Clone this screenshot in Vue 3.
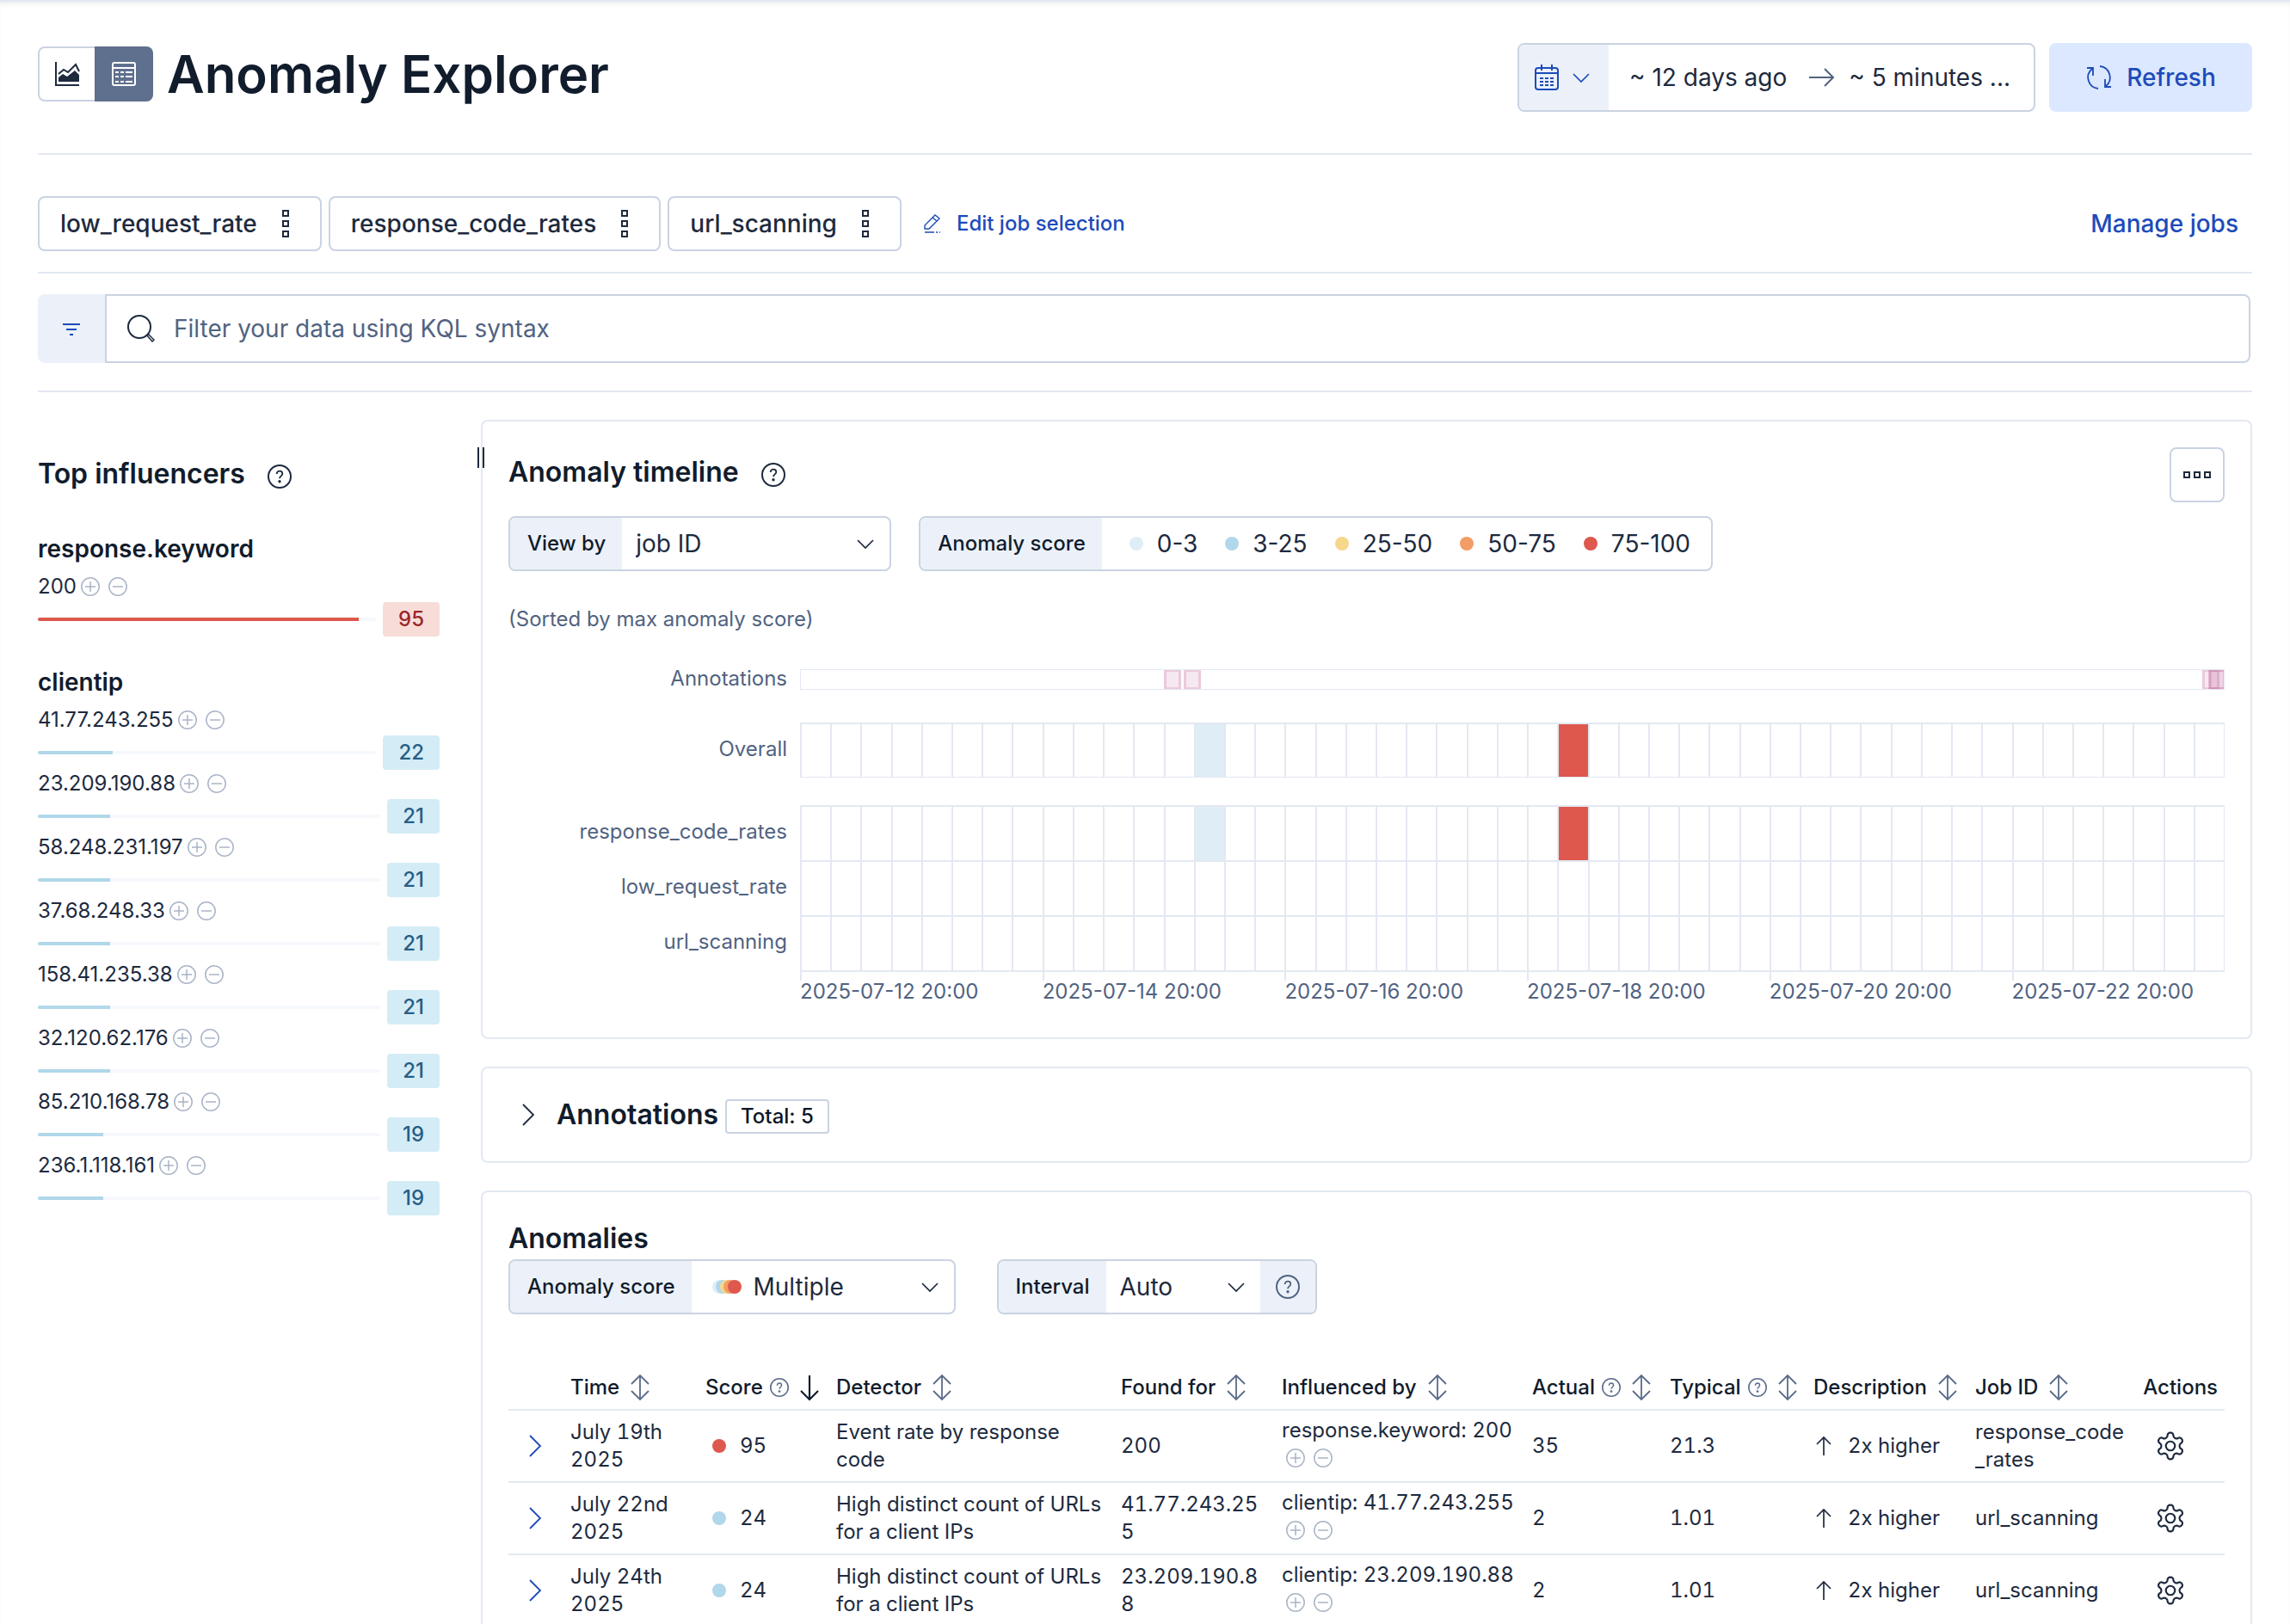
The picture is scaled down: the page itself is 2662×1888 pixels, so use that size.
<script setup>
import { ref } from 'vue'

const jobs = ['low_request_rate', 'response_code_rates', 'url_scanning']

const influencers = [
  { field: 'response.keyword', values: [{ name: '200', score: 95, level: 'critical' }] },
  {
    field: 'clientip',
    values: [
      { name: '41.77.243.255', score: 22, level: 'warning' },
      { name: '23.209.190.88', score: 21, level: 'warning' },
      { name: '58.248.231.197', score: 21, level: 'warning' },
      { name: '37.68.248.33', score: 21, level: 'warning' },
      { name: '158.41.235.38', score: 21, level: 'warning' },
      { name: '32.120.62.176', score: 21, level: 'warning' },
      { name: '85.210.168.78', score: 19, level: 'warning' },
      { name: '236.1.118.161', score: 19, level: 'warning' },
    ],
  },
]

const severities = [
  { label: '0-3', level: 'low' },
  { label: '3-25', level: 'warning' },
  { label: '25-50', level: 'minor' },
  { label: '50-75', level: 'major' },
  { label: '75-100', level: 'critical' },
]

const bucketCount = 47
const overall = { 13: 'low', 25: 'critical' }
const lanes = [
  { label: 'response_code_rates', cells: { 13: 'low', 25: 'critical' } },
  { label: 'low_request_rate', cells: {} },
  { label: 'url_scanning', cells: {} },
]
const ticks = [
  '2025-07-12 20:00',
  '2025-07-14 20:00',
  '2025-07-16 20:00',
  '2025-07-18 20:00',
  '2025-07-20 20:00',
  '2025-07-22 20:00',
]
// start of each annotation as a share of the visible time range
const annotations = [25.5, 26.9, 98.5, 98.9, 99]

const columns = [
  { label: 'Time', width: 157, sort: 'sortable' },
  { label: 'Score', width: 152, sort: 'down', help: true },
  { label: 'Detector', width: null, sort: 'sortable' },
  { label: 'Found for', width: 187, sort: 'sortable' },
  { label: 'Influenced by', width: 291, sort: 'sortable' },
  { label: 'Actual', width: 160, sort: 'sortable', help: true },
  { label: 'Typical', width: 167, sort: 'sortable', help: true },
  { label: 'Description', width: 188, sort: 'sortable' },
  { label: 'Job ID', width: 195, sort: 'sortable' },
]

const anomalies = [
  { time: 'July 19th 2025', score: 95, level: 'critical', detector: 'Event rate by response code', found: '200', influencer: 'response.keyword: 200', actual: '35', typical: '21.3', description: '2x higher', job: 'response_code_rates' },
  { time: 'July 22nd 2025', score: 24, level: 'warning', detector: 'High distinct count of URLs for a client IPs', found: '41.77.243.255', influencer: 'clientip: 41.77.243.255', actual: '2', typical: '1.01', description: '2x higher', job: 'url_scanning' },
  { time: 'July 24th 2025', score: 24, level: 'warning', detector: 'High distinct count of URLs for a client IPs', found: '23.209.190.88', influencer: 'clientip: 23.209.190.88', actual: '2', typical: '1.01', description: '2x higher', job: 'url_scanning' },
]

const viewBy = ref('job ID')
const severity = ref('Multiple')
const interval = ref('Auto')
const query = ref('')
</script>

<template>
  <svg class="sprite" aria-hidden="true">
    <symbol id="i-chart" viewBox="0 0 32 32">
      <path d="M3 2v27h27" fill="none" stroke="currentColor" stroke-width="2" />
      <path d="M6 25v-5l5-4 5 3 9-7 5 5v8H6z" fill="currentColor" />
      <path d="M6 16l6-5 5 3 9-9 4 8" fill="none" stroke="currentColor" stroke-width="2" />
    </symbol>
    <symbol id="i-table" viewBox="0 0 32 32">
      <rect x="3" y="3" width="26" height="26" rx="2" fill="none" stroke="currentColor" stroke-width="2" />
      <path d="M3 9h26" stroke="currentColor" stroke-width="2" />
      <path d="M6 14h4M12 14h4M18 14h8M6 19h4M12 19h4M18 19h8M6 25h4M12 25h4M18 25h8" stroke="currentColor" stroke-width="2" />
    </symbol>
    <symbol id="i-calendar" viewBox="0 0 32 32">
      <rect x="3" y="5" width="26" height="25" rx="3" fill="none" stroke="currentColor" stroke-width="2" />
      <path d="M3 11h26M10 1v7M22 1v7" fill="none" stroke="currentColor" stroke-width="2" />
      <path d="M8 17h4M14 17h4M20 17h4M8 21h4M14 21h4M20 21h4M8 25h4M14 25h4M20 25h4" stroke="currentColor" stroke-width="2" />
    </symbol>
    <symbol id="i-down" viewBox="0 0 24 24">
      <path d="M3 8l9 9 9-9" fill="none" stroke="currentColor" stroke-width="1.7" />
    </symbol>
    <symbol id="i-right" viewBox="0 0 32 32">
      <path d="M9 4l12 12L9 28" fill="none" stroke="currentColor" stroke-width="1.8" />
    </symbol>
    <symbol id="i-arrow" viewBox="0 0 32 32">
      <path d="M2 16h28M20 6l10 10-10 10" fill="none" stroke="currentColor" stroke-width="2" />
    </symbol>
    <symbol id="i-refresh" viewBox="0 0 32 32">
      <path d="M17 3a13 13 0 0 1 7 23M23 18v9h7M15 29A13 13 0 0 1 8 6M9 14V5H2" fill="none" stroke="currentColor" stroke-width="1.8" />
    </symbol>
    <symbol id="i-menu-v" viewBox="0 0 32 32">
      <path d="M13 1h6v6h-6zM13 13h6v6h-6zM13 25h6v6h-6z" fill="none" stroke="currentColor" stroke-width="2" />
    </symbol>
    <symbol id="i-menu-h" viewBox="0 0 32 32">
      <path d="M1 13h6v6H1zM13 13h6v6h-6zM25 13h6v6h-6z" fill="none" stroke="currentColor" stroke-width="2" />
    </symbol>
    <symbol id="i-pencil" viewBox="0 0 24 24">
      <path d="M3 18v-4L15 2l5 4L8 18zM12 5l5 4" fill="none" stroke="currentColor" stroke-width="1.4" />
      <path d="M3 22h11M16 22h2M20 22h1" stroke="currentColor" stroke-width="1.6" />
    </symbol>
    <symbol id="i-filter" viewBox="0 0 24 24">
      <path d="M2 7h20M6 13h12M10 19h4" stroke="currentColor" stroke-width="2" />
    </symbol>
    <symbol id="i-search" viewBox="0 0 32 32">
      <circle cx="14" cy="14" r="13" fill="none" stroke="currentColor" stroke-width="2" />
      <path d="M23 24l1.5-1.5 6.500 6.500-2 2z" fill="none" stroke="currentColor" stroke-width="1.5" />
    </symbol>
    <symbol id="i-help" viewBox="0 0 28 28">
      <circle cx="14" cy="14" r="13" fill="none" stroke="currentColor" stroke-width="2" />
      <path d="M10.7 11c0-2 1.3-3.300 3.300-3.300s3.300 1.200 3.300 3c0 2.600-3.300 2.800-3.300 5.600" fill="none" stroke="currentColor" stroke-width="1.8" />
      <circle cx="14" cy="19.8" r="1.7" fill="currentColor" />
    </symbol>
    <symbol id="i-plus" viewBox="0 0 24 24">
      <circle cx="12" cy="12" r="10.2" fill="none" stroke="currentColor" stroke-width="1.5" />
      <path d="M6 12h12M12 6v12" stroke="currentColor" stroke-width="1.5" />
    </symbol>
    <symbol id="i-minus" viewBox="0 0 24 24">
      <circle cx="12" cy="12" r="10.2" fill="none" stroke="currentColor" stroke-width="1.5" />
      <path d="M6 12h12" stroke="currentColor" stroke-width="1.5" />
    </symbol>
    <symbol id="i-sortable" viewBox="0 0 32 32">
      <path d="M16 3v27M6 12L16 2l10 10M6 20l10 10 10-10" fill="none" stroke="currentColor" stroke-width="1.8" />
    </symbol>
    <symbol id="i-sort-down" viewBox="0 0 32 32">
      <path d="M16 2v28M6 20l10 10 10-10" fill="none" stroke="currentColor" stroke-width="2.2" />
    </symbol>
    <symbol id="i-up" viewBox="0 0 24 24">
      <path d="M12 2v21M4 10l8-8 8 8" fill="none" stroke="currentColor" stroke-width="1.7" />
    </symbol>
    <symbol id="i-gear" viewBox="1 1 22 22">
      <path d="M12.22 2h-.44a2 2 0 0 0-2 2v.18a2 2 0 0 1-1 1.73l-.43.25a2 2 0 0 1-2 0l-.15-.08a2 2 0 0 0-2.73.73l-.22.38a2 2 0 0 0 .73 2.73l.15.1a2 2 0 0 1 1 1.72v.51a2 2 0 0 1-1 1.74l-.15.09a2 2 0 0 0-.73 2.73l.22.38a2 2 0 0 0 2.73.73l.15-.08a2 2 0 0 1 2 0l.43.25a2 2 0 0 1 1 1.73V20a2 2 0 0 0 2 2h.44a2 2 0 0 0 2-2v-.18a2 2 0 0 1 1-1.73l.43-.25a2 2 0 0 1 2 0l.15.08a2 2 0 0 0 2.73-.73l.22-.39a2 2 0 0 0-.73-2.73l-.15-.08a2 2 0 0 1-1-1.74v-.5a2 2 0 0 1 1-1.74l.15-.09a2 2 0 0 0 .73-2.73l-.22-.38a2 2 0 0 0-2.73-.73l-.15.08a2 2 0 0 1-2 0l-.43-.25a2 2 0 0 1-1-1.73V4a2 2 0 0 0-2-2z" fill="none" stroke="currentColor" stroke-width="1.4" />
      <circle cx="12" cy="12" r="3.4" fill="none" stroke="currentColor" stroke-width="1.4" />
    </symbol>
    <symbol id="i-multiple" viewBox="0 0 34 16">
      <circle cx="8" cy="8" r="8" fill="#dfeef6" />
      <circle cx="12" cy="8" r="8" fill="#b0d7ea" />
      <circle cx="17" cy="8" r="8" fill="#f6d78b" />
      <circle cx="21" cy="8" r="8" fill="#f29c66" />
      <circle cx="26" cy="8" r="8" fill="#de584e" />
    </symbol>
  </svg>

  <div class="app">
    <header class="page-header">
      <div class="title-row">
        <div class="view-toggle">
          <button type="button" aria-label="Single metric viewer"><svg class="ic ic-32"><use href="#i-chart" /></svg></button>
          <button type="button" class="active" aria-label="Anomaly explorer"><svg class="ic ic-32"><use href="#i-table" /></svg></button>
        </div>
        <h1>Anomaly Explorer</h1>
      </div>
      <div class="time-controls">
        <div class="date-picker">
          <button type="button" class="quick" aria-label="Date quick select">
            <svg class="ic ic-32"><use href="#i-calendar" /></svg>
            <svg class="ic ic-24"><use href="#i-down" /></svg>
          </button>
          <button type="button" class="range">~ 12 days ago</button>
          <svg class="ic ic-32 range-arrow"><use href="#i-arrow" /></svg>
          <button type="button" class="range">~ 5 minutes ...</button>
        </div>
        <button type="button" class="refresh"><svg class="ic ic-32"><use href="#i-refresh" /></svg>Refresh</button>
      </div>
    </header>

    <div class="jobs-bar">
      <button v-for="job in jobs" :key="job" type="button" class="job">
        {{ job }}<svg class="ic ic-32"><use href="#i-menu-v" /></svg>
      </button>
      <button type="button" class="edit-jobs"><svg class="ic ic-24"><use href="#i-pencil" /></svg>Edit job selection</button>
      <a href="#jobs" class="manage">Manage jobs</a>
    </div>

    <div class="query-bar">
      <button type="button" class="filter" aria-label="Saved queries"><svg class="ic ic-24"><use href="#i-filter" /></svg></button>
      <label class="query">
        <svg class="ic ic-32"><use href="#i-search" /></svg>
        <input v-model="query" type="search" placeholder="Filter your data using KQL syntax" aria-label="Filter your data using KQL syntax" />
      </label>
    </div>

    <div class="body">
      <aside class="influencers">
        <div class="heading">
          <h2>Top influencers</h2>
          <button type="button" class="help" aria-label="Help"><svg class="ic ic-28"><use href="#i-help" /></svg></button>
        </div>
        <section v-for="group in influencers" :key="group.field">
          <h3>{{ group.field }}</h3>
          <div v-for="item in group.values" :key="item.name" class="influencer">
            <div class="influencer-name">
              {{ item.name }}
              <span class="filters">
                <button type="button" aria-label="Add filter"><svg class="ic ic-24"><use href="#i-plus" /></svg></button>
                <button type="button" aria-label="Remove filter"><svg class="ic ic-24"><use href="#i-minus" /></svg></button>
              </span>
            </div>
            <div class="influencer-score">
              <div class="track"><div class="fill" :class="item.level" :style="{ width: item.score + '%' }"></div></div>
              <span class="score-badge" :class="item.level">{{ item.score }}</span>
            </div>
          </div>
        </section>
      </aside>

      <main>
        <div class="resizer" role="separator" aria-orientation="vertical"></div>
        <section class="panel">
          <div class="panel-head">
            <div class="heading">
              <h2>Anomaly timeline</h2>
              <button type="button" class="help" aria-label="Help"><svg class="ic ic-28"><use href="#i-help" /></svg></button>
            </div>
            <button type="button" class="more" aria-label="Actions"><svg class="ic ic-32"><use href="#i-menu-h" /></svg></button>
          </div>
          <div class="controls">
            <div class="control">
              <label for="view-by">View by</label>
              <span class="select view-by">
                <select id="view-by" v-model="viewBy"><option>job ID</option></select>
                <svg class="ic ic-24"><use href="#i-down" /></svg>
              </span>
            </div>
            <div class="control">
              <span class="control-label">Anomaly score</span>
              <ul class="legend">
                <li v-for="s in severities" :key="s.label"><span class="dot-box"><i class="dot" :class="s.level"></i></span>{{ s.label }}</li>
              </ul>
            </div>
          </div>
          <p class="sorted">(Sorted by max anomaly score)</p>

          <div class="chart">
            <div class="lane annotation-lane">
              <span class="lane-label">Annotations</span>
              <div class="strip">
                <i v-for="a in annotations" :key="a" class="annotation" :style="{ left: a + '%' }"></i>
              </div>
            </div>
            <div class="lanes overall">
              <div class="lane">
                <span class="lane-label">Overall</span>
                <div class="cells"><i v-for="n in bucketCount" :key="n" :class="overall[n - 1]"></i></div>
              </div>
            </div>
            <div class="lanes">
              <div v-for="lane in lanes" :key="lane.label" class="lane">
                <span class="lane-label">{{ lane.label }}</span>
                <div class="cells"><i v-for="n in bucketCount" :key="n" :class="lane.cells[n - 1]"></i></div>
              </div>
            </div>
            <div class="lane">
              <span class="lane-label"></span>
              <div class="axis"><span v-for="t in ticks" :key="t">{{ t }}</span></div>
            </div>
          </div>
        </section>

        <section class="panel annotations-panel">
          <button type="button" class="toggle" aria-label="Show annotations"><svg class="ic ic-32"><use href="#i-right" /></svg></button>
          <h2>Annotations</h2>
          <span class="total">Total: 5</span>
        </section>

        <section class="panel">
          <h2 class="anomalies-title">Anomalies</h2>
          <div class="controls table-controls">
            <div class="control">
              <label for="severity">Anomaly score</label>
              <span class="select severity">
                <svg class="multiple"><use href="#i-multiple" /></svg>
                <select id="severity" v-model="severity"><option>Multiple</option></select>
                <svg class="ic ic-24"><use href="#i-down" /></svg>
              </span>
            </div>
            <div class="control">
              <label for="interval">Interval</label>
              <span class="select interval">
                <select id="interval" v-model="interval"><option>Auto</option></select>
                <svg class="ic ic-24"><use href="#i-down" /></svg>
              </span>
              <button type="button" class="append" aria-label="Interval help"><svg class="ic ic-28"><use href="#i-help" /></svg></button>
            </div>
          </div>

          <table>
            <colgroup>
              <col class="col-expand" />
              <col v-for="c in columns" :key="c.label" :style="c.width ? { width: c.width + 'px' } : null" />
              <col class="col-actions" />
            </colgroup>
            <thead>
              <tr>
                <th></th>
                <th v-for="c in columns" :key="c.label">
                  <button type="button" class="sort">
                    {{ c.label }}
                    <svg v-if="c.help" class="ic ic-22 sub"><use href="#i-help" /></svg>
                    <svg class="ic ic-32" :class="c.sort === 'down' ? '' : 'sub'"><use :href="c.sort === 'down' ? '#i-sort-down' : '#i-sortable'" /></svg>
                  </button>
                </th>
                <th class="actions">Actions</th>
              </tr>
            </thead>
            <tbody>
              <tr v-for="row in anomalies" :key="row.time">
                <td><button type="button" class="expand" aria-label="Expand row"><svg class="ic ic-32"><use href="#i-right" /></svg></button></td>
                <td>{{ row.time }}</td>
                <td><span class="cell-flex"><span class="dot-box"><i class="dot" :class="row.level"></i></span>{{ row.score }}</span></td>
                <td>{{ row.detector }}</td>
                <td>{{ row.found }}</td>
                <td class="influenced">
                  {{ row.influencer }}
                  <span class="filters">
                    <button type="button" aria-label="Add filter"><svg class="ic ic-24"><use href="#i-plus" /></svg></button>
                    <button type="button" aria-label="Remove filter"><svg class="ic ic-24"><use href="#i-minus" /></svg></button>
                  </span>
                </td>
                <td>{{ row.actual }}</td>
                <td>{{ row.typical }}</td>
                <td><span class="cell-flex description"><svg class="ic ic-24"><use href="#i-up" /></svg>{{ row.description }}</span></td>
                <td>{{ row.job }}</td>
                <td><button type="button" class="gear" aria-label="Row actions"><svg class="ic ic-34"><use href="#i-gear" /></svg></button></td>
              </tr>
            </tbody>
          </table>
        </section>
      </main>
    </div>
  </div>
</template>

<style>
body {
  margin: 0;
  background: #fff;
}
</style>

<style scoped>
.app {
  box-sizing: border-box;
  height: 100vh;
  overflow: hidden;
  padding: 0 44px;
  border-top: 2px solid #e3e8f2;
  box-shadow: inset 0 6px 6px -4px rgba(40, 50, 70, 0.1);
  font-family: Inter, 'Liberation Sans', sans-serif;
  font-size: 24px;
  line-height: 32px;
  color: #1d2a3e;
}
.app *,
.app *::before {
  box-sizing: border-box;
}
.sprite {
  display: none;
}
h1,
h2,
h3,
p,
ul {
  margin: 0;
  padding: 0;
}
h1,
h2,
h3 {
  color: #111c2c;
  font-weight: 600;
}
h1 {
  font-size: 60px;
  line-height: 72px;
}
h2 {
  font-size: 32px;
  line-height: 40px;
}
h3 {
  font-size: 28px;
  line-height: 40px;
}
button,
select,
input {
  margin: 0;
  padding: 0;
  border: 0;
  background: none;
  color: inherit;
  font: inherit;
}
button {
  display: flex;
  align-items: center;
  justify-content: center;
  cursor: pointer;
}
.ic {
  flex: none;
  display: block;
}
.ic-22 {
  width: 22px;
  height: 22px;
}
.ic-24 {
  width: 24px;
  height: 24px;
}
.ic-28 {
  width: 28px;
  height: 28px;
}
.ic-32 {
  width: 32px;
  height: 32px;
}
.ic-34 {
  width: 34px;
  height: 34px;
}

.page-header {
  display: flex;
  justify-content: space-between;
  align-items: flex-start;
  padding: 48px 0;
  border-bottom: 2px solid #e3e8f2;
}
.title-row {
  display: flex;
  align-items: center;
  gap: 16px;
  height: 72px;
}
.view-toggle {
  display: flex;
  border: 2px solid #cad3e2;
  border-radius: 8px;
}
.view-toggle button {
  width: 64px;
  height: 60px;
}
.view-toggle .active {
  width: 68px;
  height: 64px;
  margin: -2px -2px -2px 0;
  border-radius: 0 8px 8px 0;
  background: #5f6f8e;
  color: #fff;
}
.time-controls {
  display: flex;
  gap: 16px;
}
.date-picker {
  display: flex;
  align-items: center;
  width: 602px;
  height: 80px;
  overflow: hidden;
  border: 2px solid #cad3e2;
  border-radius: 8px;
  font-size: 28px;
}
.quick {
  width: 104px;
  height: 100%;
  gap: 12px;
  padding-right: 4px;
  background: #ecf1f9;
  color: #1d4bba;
}
.range {
  padding: 0 24px;
  white-space: nowrap;
}
.range-arrow {
  margin-right: -8px;
  color: #516381;
}
.refresh {
  width: 236px;
  height: 80px;
  gap: 16px;
  border-radius: 8px;
  background: #dbe8ff;
  color: #1d4bba;
  font-size: 28px;
  font-weight: 500;
}

.jobs-bar {
  display: flex;
  align-items: center;
  gap: 8px;
  padding: 48px 0 24px;
  border-bottom: 2px solid #e3e8f2;
}
.job {
  gap: 17px;
  height: 64px;
  padding: 0 24px;
  border: 2px solid #cad3e2;
  border-radius: 8px;
  font-size: 28px;
  font-weight: 500;
}
.edit-jobs {
  gap: 16px;
  padding: 0 16px;
  color: #1d4bba;
  font-weight: 500;
}
.manage {
  margin-left: auto;
  padding: 0 16px;
  color: #1d4bba;
  font-size: 28px;
  font-weight: 500;
  text-decoration: none;
}

.query-bar {
  display: flex;
  padding: 24px 2px 32px 0;
  border-bottom: 2px solid #e3e8f2;
}
.filter {
  width: 78px;
  height: 80px;
  border-radius: 8px 0 0 8px;
  background: #ecf1f9;
  color: #1d4bba;
}
.query {
  flex: 1;
  display: flex;
  align-items: center;
  gap: 22px;
  padding: 0 24px;
  border: 2px solid #cad3e2;
  border-radius: 0 8px 8px 0;
}
.query input {
  flex: 1;
  font-size: 28px;
  outline: 0;
}
.query input::placeholder {
  color: #516381;
  opacity: 1;
}

.body {
  display: flex;
  align-items: flex-start;
}
.influencers {
  flex: none;
  width: 467px;
  margin-right: 48px;
  padding-top: 75px;
}
.heading {
  display: flex;
  align-items: center;
  gap: 26px;
}
.help {
  margin-top: 6px;
}
.influencers > .heading {
  margin-bottom: 47px;
}
.influencers section {
  margin-bottom: 33px;
}
.influencers h3 {
  margin-bottom: 8px;
}
.influencer-name {
  display: flex;
  align-items: center;
  gap: 4px;
  margin-bottom: 2px;
}
.filters {
  display: inline-flex;
  gap: 8px;
  color: #a9b4c7;
}
.influencer-score {
  display: flex;
  align-items: center;
  gap: 8px;
  height: 40px;
}
.track {
  flex: 1;
  height: 4px;
  overflow: hidden;
  border-radius: 2px;
  background: #f6f8fc;
}
.fill {
  height: 100%;
}
.score-badge {
  padding: 4px 18px;
  border-radius: 4px;
  font-weight: 500;
}
.score-badge.critical {
  background: #f8dcd8;
  color: #9b2628;
}
.score-badge.warning {
  background: #d4ecf6;
  color: #285e85;
}
.fill.critical,
.dot.critical,
.cells .critical {
  background: #de584e;
}
.fill.warning,
.dot.warning {
  background: #b0d7ea;
}
.dot.minor {
  background: #f6d78b;
}
.dot.major {
  background: #f29c66;
}
.dot.low,
.cells .low {
  background: #dfedf6;
}

main {
  position: relative;
  flex: 1;
  display: flex;
  flex-direction: column;
  gap: 32px;
  min-width: 0;
  padding-top: 32px;
}
.resizer {
  position: absolute;
  top: 64px;
  left: -4px;
  width: 8px;
  height: 24px;
  border: solid #1d2a3e;
  border-width: 0 2px;
}
.panel {
  padding: 30px;
  border: 2px solid #e3e8f2;
  border-radius: 8px;
}
.panel-head {
  display: flex;
  justify-content: space-between;
  align-items: flex-start;
  margin-bottom: 16px;
}
.panel-head .heading {
  height: 58px;
}
.more {
  width: 64px;
  height: 64px;
  border: 2px solid #cad3e2;
  border-radius: 8px;
}
.controls {
  display: flex;
  gap: 32px;
}
.table-controls {
  gap: 48px;
}
.control {
  display: flex;
  height: 64px;
  overflow: hidden;
  border: 2px solid #cad3e2;
  border-radius: 8px;
}
.control label,
.control-label {
  display: flex;
  align-items: center;
  padding: 0 19px 0 20px;
  background: #ecf1f9;
  color: #111c2c;
  font-weight: 500;
}
.select {
  display: flex;
  align-items: center;
  padding: 0 16px;
  font-size: 28px;
}
.select select {
  flex: 1;
  min-width: 0;
  height: 100%;
  appearance: none;
}
.view-by {
  width: 311px;
}
.severity {
  width: 305px;
  padding-left: 24px;
}
.interval {
  width: 179px;
}
.multiple {
  flex: none;
  width: 34px;
  height: 16px;
  margin-right: 14px;
}
.append {
  width: 64px;
  background: #ecf1f9;
  color: #516381;
}
.legend {
  display: flex;
  align-items: center;
  gap: 24px;
  padding: 0 24px;
  list-style: none;
  font-size: 28px;
}
.legend li {
  display: flex;
  align-items: center;
  gap: 8px;
}
.dot-box {
  display: flex;
  align-items: center;
  justify-content: center;
  width: 32px;
}
.dot {
  width: 16px;
  height: 16px;
  border-radius: 50%;
}
.sorted {
  margin: 40px 0 42px;
  color: #516381;
}

.chart {
  display: flex;
  flex-direction: column;
  color: #516381;
}
.lane {
  display: flex;
  align-items: center;
}
.annotation-lane {
  height: 24px;
  margin-bottom: 38px;
}
.lane-label {
  flex: none;
  width: 339px;
  padding: 0 15px 2px 0;
  text-align: right;
}
.strip {
  position: relative;
  flex: 1;
  height: 24px;
  overflow: hidden;
  border: 1px solid #e3e8f2;
}
.annotation {
  position: absolute;
  top: -1px;
  width: 20px;
  height: 24px;
  border: 3px solid rgba(200, 110, 160, 0.25);
  background: rgba(200, 110, 160, 0.16);
}
.overall {
  margin-bottom: 32px;
}
.cells {
  flex: 1;
  display: grid;
  grid-template-columns: repeat(47, minmax(0, 1fr));
  height: 64px;
  border: solid #e3e8f2;
  border-width: 2px 1px 0 0;
}
.overall .cells {
  border-bottom-width: 1px;
}
.cells i {
  border-left: 2px solid #e3e8f2;
}
.axis {
  flex: 1;
  display: grid;
  grid-template-columns: repeat(47, minmax(0, 1fr));
  height: 48px;
  padding-right: 1px;
  border-top: 2px solid #e3e8f2;
}
.axis span {
  grid-column: span 8;
  padding-top: 7px;
  background: linear-gradient(#e3e8f2, #e3e8f2) 0 0 / 2px 10px no-repeat;
  white-space: nowrap;
}
.axis span:last-child {
  grid-column: span 7;
}

.annotations-panel {
  display: flex;
  align-items: center;
  gap: 8px;
  height: 112px;
}
.toggle {
  width: 48px;
  height: 48px;
}
.total {
  padding: 2px 16px;
  margin-top: 4px;
  border: 2px solid #cad3e2;
  border-radius: 4px;
  color: #0b1628;
  font-weight: 500;
  line-height: 32px;
}

.anomalies-title {
  line-height: 48px;
}
table {
  width: 100%;
  margin-top: 54px;
  border-collapse: separate;
  border-spacing: 0;
  table-layout: fixed;
  font-variant-numeric: tabular-nums;
}
.col-expand {
  width: 64px;
}
.col-actions {
  width: 103px;
}
th,
td {
  padding: 0 8px;
  border-bottom: 2px solid #e3e8f2;
  text-align: left;
  vertical-align: middle;
  overflow-wrap: anywhere;
}
th {
  height: 58px;
  padding-top: 6px;
  color: #111c2c;
  font-weight: 500;
  white-space: nowrap;
}
td {
  height: 84px;
}
.sort {
  gap: 8px;
}
.sub {
  color: #5a6b8a;
}
th.actions {
  text-align: right;
}
.cell-flex {
  display: flex;
  align-items: center;
  gap: 8px;
  white-space: nowrap;
}
.description {
  gap: 16px;
}
.influenced {
  padding-bottom: 4px;
  white-space: nowrap;
}
.influenced .filters {
  display: flex;
  height: 32px;
  margin-left: 4px;
}
.expand {
  width: 48px;
  color: #1d4bba;
}
.gear {
  margin-left: 15px;
}
</style>
